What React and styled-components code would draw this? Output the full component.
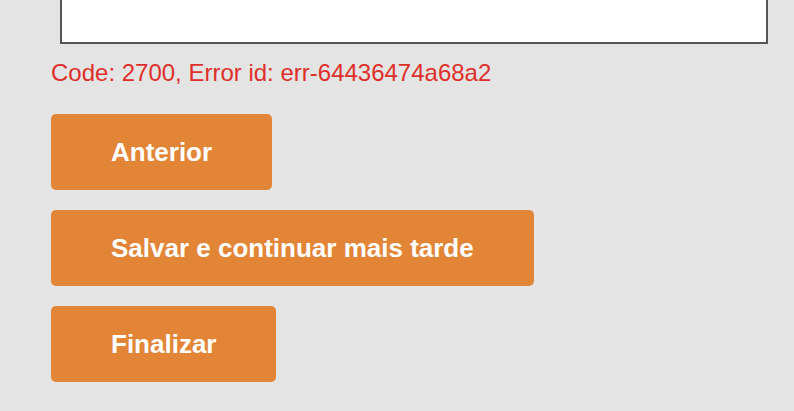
import React from 'react';
import styled, { createGlobalStyle } from 'styled-components';

const GlobalStyle = createGlobalStyle`
  html, body {
    margin: 0;
    padding: 0;
    background: #e4e4e4;
    font-family: "Liberation Sans", Arial, Helvetica, sans-serif;
  }
`

// Form area
const Form = styled.div`
  padding: 0 0 0 51px;
  margin-top: -60px;
  display: flex;
  flex-direction: column;
  align-items: flex-start;
`
const Answer = styled.textarea`
  box-sizing: border-box;
  display: block;
  width: 708px;
  height: 104px;
  margin: 0 0 0 9px;
  border: 2px solid #555;
  background: #fff;
  resize: none;
  outline: none;
`
const ErrorText = styled.p`
  margin: 15px 0 0;
  font-size: 24px;
  line-height: 28px;
  color: #df2f2a;
`

// Actions
const Actions = styled.div`
  margin-top: 27px;
  display: flex;
  flex-direction: column;
  align-items: flex-start;
  gap: 20px;
`
const Button = styled.button`
  box-sizing: border-box;
  height: 76px;
  padding: 0 60px;
  border: none;
  border-radius: 5px;
  background: #e38537;
  color: #fff;
  font-family: "Liberation Sans", Arial, Helvetica, sans-serif;
  font-size: 26px;
  font-weight: bold;
  cursor: pointer;
`

export default function App() {
  return (
    <>
      <GlobalStyle />
      <Form>
        <Answer />
        <ErrorText>Code: 2700, Error id: err-64436474a68a2</ErrorText>
        <Actions>
          <Button>Anterior</Button>
          <Button>Salvar e continuar mais tarde</Button>
          <Button>Finalizar</Button>
        </Actions>
      </Form>
    </>
  )
}
